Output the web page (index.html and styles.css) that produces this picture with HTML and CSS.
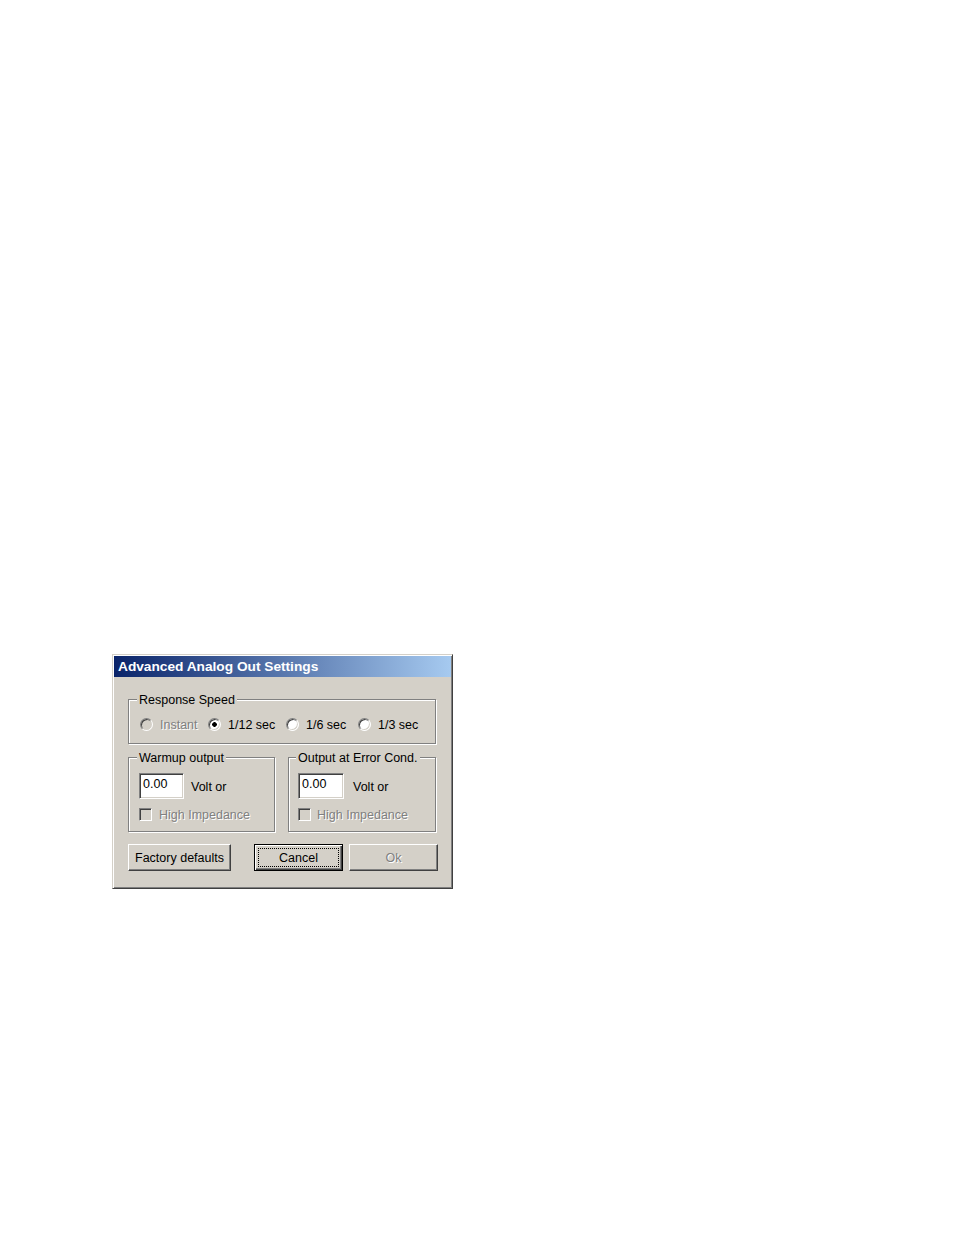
FILE: index.html
```html
<!DOCTYPE html>
<html>
<head>
<meta charset="utf-8">
<link rel="stylesheet" href="styles.css">
</head>
<body>
<div class="page">
  <div class="dialog">
    <div class="titlebar">Advanced Analog Out Settings</div>
    <div class="body">
      <div class="group group-speed">
        <div class="group-title">Response Speed</div>
        <div class="radio-row">
          <div class="opt disabled"><span class="radio"></span><span class="lbl">Instant</span></div>
          <div class="opt"><span class="radio checked"></span><span class="lbl">1/12 sec</span></div>
          <div class="opt"><span class="radio"></span><span class="lbl">1/6 sec</span></div>
          <div class="opt"><span class="radio"></span><span class="lbl">1/3 sec</span></div>
        </div>
      </div>
      <div class="groups-row">
        <div class="group group-warmup">
          <div class="group-title">Warmup output</div>
          <div class="edit-row">
            <div class="edit">0.00</div>
            <span class="volt">Volt or</span>
          </div>
          <div class="check-row">
            <span class="checkbox"></span><span class="lbl disabled-text">High Impedance</span>
          </div>
        </div>
        <div class="group group-error">
          <div class="group-title">Output at Error Cond.</div>
          <div class="edit-row">
            <div class="edit">0.00</div>
            <span class="volt">Volt or</span>
          </div>
          <div class="check-row">
            <span class="checkbox"></span><span class="lbl disabled-text">High Impedance</span>
          </div>
        </div>
      </div>
      <div class="button-row">
        <div class="btn btn-factory">Factory defaults</div>
        <div class="btn btn-default btn-cancel"><span class="focus">Cancel</span></div>
        <div class="btn btn-ok disabled-text">Ok</div>
      </div>
    </div>
  </div>
</div>
</body>
</html>
```

FILE: styles.css
```css
html, body {
  margin: 0;
  padding: 0;
  background: #ffffff;
}

.page {
  padding: 654px 0 0 112px;
  font-family: "Liberation Sans", Arial, sans-serif;
  font-size: 12.5px;
  color: #000;
}

.dialog {
  box-sizing: border-box;
  width: 341px;
  height: 235px;
  background: #d4d0c8;
  border: 1px solid;
  border-color: #d4d0c8 #404040 #404040 #d4d0c8;
  box-shadow: inset 1px 1px 0 #ffffff, inset -1px -1px 0 #808080;
  padding: 1px;
}

.titlebar {
  box-sizing: border-box;
  height: 21px;
  line-height: 20px;
  padding-top: 1px;
  background: linear-gradient(to right, #0a246a, #a6caf0);
  color: #ffffff;
  font-weight: bold;
  font-size: 13.7px;
  padding-left: 4px;
  white-space: nowrap;
  overflow: hidden;
}

.body {
  padding: 22px 0 0 14px;
}

.group {
  box-sizing: border-box;
  border: 1px solid #808080;
  box-shadow: inset 1px 1px 0 #ffffff, 1px 1px 0 #ffffff;
}

.group-title {
  box-sizing: border-box;
  width: max-content;
  margin-top: -8px;
  margin-left: 8px;
  padding: 2px 2px 0 2px;
  height: 15px;
  line-height: 13px;
  background: #d4d0c8;
  white-space: nowrap;
}

.group-speed {
  width: 308px;
  height: 45px;
}

.radio-row {
  display: grid;
  grid-template-columns: 68px 78px 72px auto;
  margin-top: 10px;
  padding-left: 11px;
  height: 14px;
}

.opt {
  display: flex;
  align-items: center;
  height: 14px;
  white-space: nowrap;
}

.radio {
  box-sizing: border-box;
  width: 13px;
  height: 13px;
  flex: none;
  border-radius: 50%;
  border: 1px solid;
  border-color: #808080 #ffffff #ffffff #808080;
  box-shadow: inset 1px 1px 0 #404040, inset -1px -1px 0 #d4d0c8;
  background: #ffffff;
  margin-right: 7px;
}

.radio.checked {
  background: radial-gradient(circle, #000000 0, #000000 2px, #ffffff 2.6px);
}

.opt.disabled .radio {
  background: #d4d0c8;
}

.opt.disabled .lbl,
.disabled-text {
  color: #808080;
  text-shadow: 1px 1px 0 #ffffff;
}

.lbl {
  box-sizing: border-box;
  height: 15px;
  padding-top: 2px;
  line-height: 13px;
}

.groups-row {
  display: flex;
  gap: 13px;
  margin-top: 13px;
}

.group-warmup {
  width: 147px;
  height: 75px;
}

.group-error {
  width: 148px;
  height: 75px;
}

.group-error .group-title {
  margin-left: 7px;
}

.edit-row {
  display: flex;
  align-items: center;
  margin-top: 8px;
  padding-left: 10px;
  height: 26px;
}

.group-error .edit-row {
  padding-left: 9px;
}

.edit {
  box-sizing: border-box;
  width: 45px;
  height: 26px;
  border: 1px solid;
  border-color: #808080 #ffffff #ffffff #808080;
  box-shadow: inset 1px 1px 0 #404040, inset -1px -1px 0 #d4d0c8;
  background: #ffffff;
  padding: 3px 3px 0 3px;
  line-height: 15px;
}

.group-error .edit {
  width: 46px;
}

.volt {
  box-sizing: border-box;
  margin-left: 7px;
  height: 15px;
  padding-top: 2px;
  line-height: 13px;
}

.group-error .volt {
  margin-left: 9px;
}

.check-row {
  display: flex;
  align-items: center;
  margin-top: 9px;
  padding-left: 10px;
  height: 13px;
  white-space: nowrap;
}

.group-error .check-row {
  padding-left: 9px;
}

.checkbox {
  box-sizing: border-box;
  width: 13px;
  height: 13px;
  flex: none;
  border: 1px solid;
  border-color: #808080 #ffffff #ffffff #808080;
  box-shadow: inset 1px 1px 0 #404040, inset -1px -1px 0 #d4d0c8;
  background: #d4d0c8;
  margin-right: 7px;
}

.group-error .checkbox {
  margin-right: 6px;
}

.button-row {
  display: flex;
  margin-top: 12px;
  height: 27px;
}

.btn {
  box-sizing: border-box;
  height: 27px;
  display: flex;
  align-items: center;
  justify-content: center;
  border: 1px solid;
  border-color: #ffffff #404040 #404040 #ffffff;
  box-shadow: inset -1px -1px 0 #808080, inset 1px 1px 0 #d4d0c8;
  background: #d4d0c8;
  white-space: nowrap;
  line-height: 15px;
  padding-top: 2px;
}

.btn-factory {
  width: 103px;
}

.btn-cancel {
  width: 89px;
  margin-left: 23px;
  border: 1px solid #000000;
  box-shadow: inset 1px 1px 0 #ffffff, inset -1px -1px 0 #404040, inset -2px -2px 0 #808080;
  padding: 3px;
  align-items: stretch;
}

.focus {
  flex: 1;
  display: flex;
  align-items: center;
  justify-content: center;
  border: 1px dotted #000000;
  padding-top: 1px;
}

.btn-ok {
  width: 89px;
  margin-left: 6px;
}
```
